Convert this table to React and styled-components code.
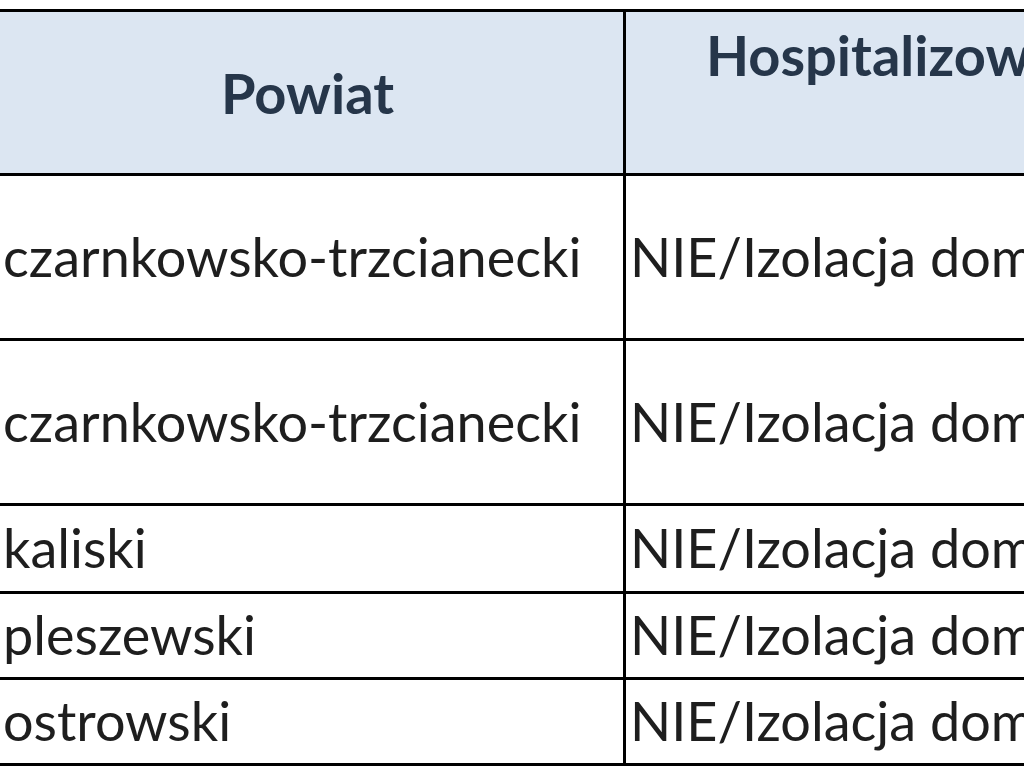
import styled, { createGlobalStyle } from "styled-components";

const GlobalStyle = createGlobalStyle`
  html, body {
    margin: 0;
    padding: 0;
    background: #ffffff;
  }
  body {
    font-family: Lato, "Open Sans", "Liberation Sans", sans-serif;
  }
`;

const Frame = styled.div`
  width: 1024px;
  height: 768px;
  overflow: hidden;
  background: #ffffff;
  padding-top: 9px;
  box-sizing: border-box;
`;

const Table = styled.table`
  border-collapse: separate;
  border-spacing: 0;
  table-layout: fixed;
  width: 1500px;
  border-top: 3px solid #000000;
`;

const HeadCell = styled.th`
  background: #dce6f2;
  color: #26364a;
  font-weight: 700;
  font-size: 56px;
  line-height: 1.2;
  height: 164px;
  padding: 0;
  border-bottom: 3px solid #000000;
  border-right: ${(p) => (p.$last ? "none" : "3px solid #000000")};
  text-align: ${(p) => (p.$top ? "left" : "center")};
  vertical-align: ${(p) => (p.$top ? "top" : "middle")};
  padding-left: ${(p) => (p.$top ? "80px" : "0")};
  padding-right: ${(p) => (p.$top ? "0" : "8px")};
  padding-top: ${(p) => (p.$top ? "9px" : "0")};
  white-space: nowrap;
  overflow: hidden;
  box-sizing: border-box;
`;

const Cell = styled.td`
  color: #1e1e1e;
  font-size: 54px;
  line-height: 1.2;
  height: ${(p) => p.$h}px;
  padding: 0 0 0 ${(p) => (p.$first ? "3px" : "4px")};
  border-bottom: 3px solid #000000;
  border-right: ${(p) => (p.$first ? "3px solid #000000" : "none")};
  vertical-align: middle;
  white-space: nowrap;
  overflow: hidden;
  box-sizing: border-box;
`;

const rows = [
  { powiat: "czarnkowsko-trzcianecki", status: "NIE/Izolacja domowa", h: 165 },
  { powiat: "czarnkowsko-trzcianecki", status: "NIE/Izolacja domowa", h: 165 },
  { powiat: "kaliski", status: "NIE/Izolacja domowa", h: 88 },
  { powiat: "pleszewski", status: "NIE/Izolacja domowa", h: 86 },
  { powiat: "ostrowski", status: "NIE/Izolacja domowa", h: 86 },
];

export default function App() {
  return (
    <>
      <GlobalStyle />
      <Frame>
        <Table>
          <colgroup>
            <col style={{ width: 626 }} />
            <col />
          </colgroup>
          <thead>
            <tr>
              <HeadCell>Powiat</HeadCell>
              <HeadCell $top $last>Hospitalizowany (TAK/NIE)</HeadCell>
            </tr>
          </thead>
          <tbody>
            {rows.map((r, i) => (
              <tr key={i}>
                <Cell $first $h={r.h}>{r.powiat}</Cell>
                <Cell $h={r.h}>{r.status}</Cell>
              </tr>
            ))}
          </tbody>
        </Table>
      </Frame>
    </>
  );
}
